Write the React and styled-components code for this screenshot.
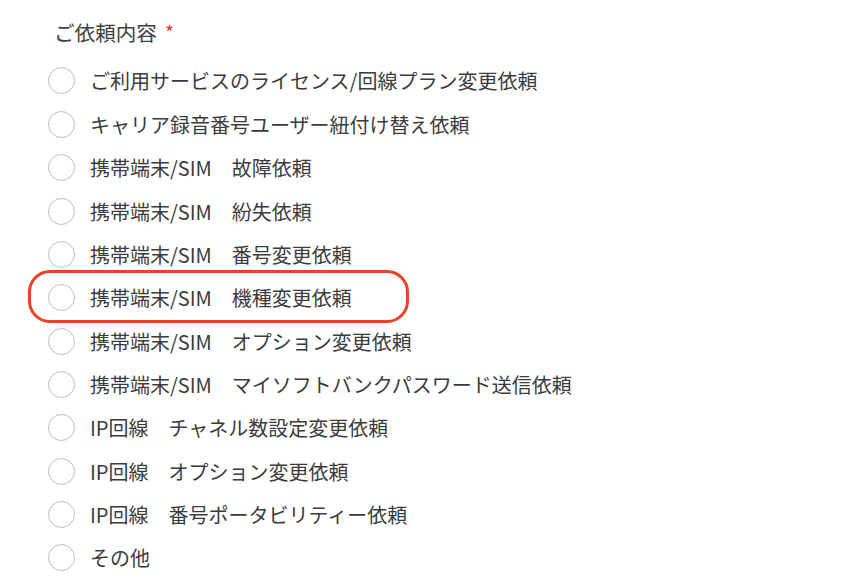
import React from "react";
import styled, { createGlobalStyle } from "styled-components";

const Global = createGlobalStyle`
  html, body { margin: 0; padding: 0; background: #ffffff; }
  body { font-family: "Noto Sans CJK JP", "Noto Sans", sans-serif; color: #333333; }
`;

const Page = styled.div`
  width: 842px;
  height: 586px;
  overflow: hidden;
  box-sizing: border-box;
  padding: 18px 0 0 48px;
`;

const Label = styled.div`
  margin-left: 6px;
  font-size: 20.6px;
  line-height: 28px;
  color: #404040;
  display: flex;
  align-items: center;
  gap: 8px;
`;

const Required = styled.span`
  color: #e0352b;
  font-size: 19px;
`;

const List = styled.div`
  margin-top: 13.3px;
  display: flex;
  flex-direction: column;
`;

const Row = styled.label`
  position: relative;
  height: 43.36px;
  display: flex;
  align-items: center;
  gap: 15px;
  font-size: 20px;
  color: #3c3c3c;
  white-space: pre;

  ${(p) =>
    p.$highlight &&
    `
    &::after {
      content: "";
      position: absolute;
      left: -20px;
      top: -6px;
      width: 381px;
      height: 53px;
      box-sizing: border-box;
      border: 3.8px solid #ea4127;
      border-radius: 22px;
      pointer-events: none;
    }
  `}
`;

const Radio = styled.input.attrs({ type: "radio" })`
  appearance: none;
  margin: 0;
  width: 27px;
  height: 27px;
  flex: 0 0 27px;
  border-radius: 50%;
  border: 1.3px solid #bcbcc2;
  background: #ffffff;
  box-sizing: border-box;
`;

const options = [
  "ご利用サービスのライセンス/回線プラン変更依頼",
  "キャリア録音番号ユーザー紐付け替え依頼",
  "携帯端末/SIM　故障依頼",
  "携帯端末/SIM　紛失依頼",
  "携帯端末/SIM　番号変更依頼",
  "携帯端末/SIM　機種変更依頼",
  "携帯端末/SIM　オプション変更依頼",
  "携帯端末/SIM　マイソフトバンクパスワード送信依頼",
  "IP回線　チャネル数設定変更依頼",
  "IP回線　オプション変更依頼",
  "IP回線　番号ポータビリティー依頼",
  "その他",
];

export default function App() {
  return (
    <>
      <Global />
      <Page>
        <Label>
          ご依頼内容<Required>*</Required>
        </Label>
        <List>
          {options.map((o, i) => (
            <Row key={o} $highlight={i === 5}>
              <Radio name="request" />
              {o}
            </Row>
          ))}
        </List>
      </Page>
    </>
  );
}
